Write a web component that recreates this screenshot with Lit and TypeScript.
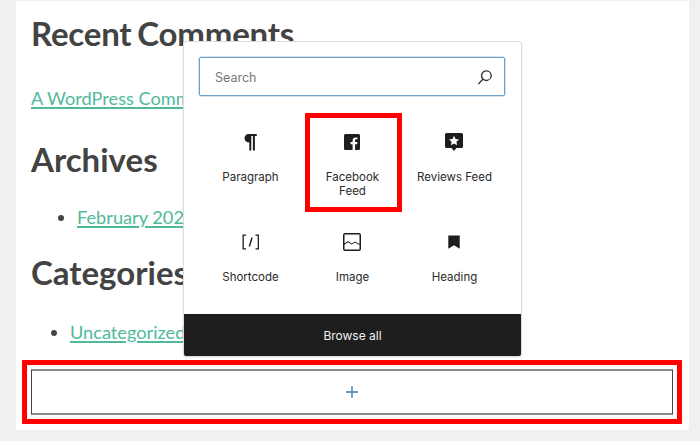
import { LitElement, html, css, svg } from "lit";
import { customElement } from "lit/decorators.js";

const icons: Record<string, unknown> = {
  para: svg`<path d="M10.200 4h8.600v2h-1.900v14.500h-2V6h-1.600v14.500h-2v-7.900c-2.800 0-4.800-1.800-4.800-4.300S8.500 4 10.200 4z"/>`,
  fb: svg`<path fill-rule="evenodd" d="M5.500 4h13A1.500 1.500 0 0 1 20 5.500v13a1.500 1.500 0 0 1-1.500 1.500h-3.400v-5.800h2l.3-2.300h-2.300v-1.500c0-.7.200-1.100 1.100-1.100h1.300V7.700c-.3 0-1-.1-1.800-.1-1.800 0-3.100 1.100-3.100 3.100v1.200h-2.100v2.300h2.100V20H5.500A1.500 1.500 0 0 1 4 18.500v-13A1.500 1.500 0 0 1 5.500 4z"/>`,
  rev: svg`<path fill-rule="evenodd" d="M4.500 3h15A1.500 1.500 0 0 1 21 4.500v12a1.500 1.500 0 0 1-1.500 1.500h-5L12 21l-2.500-3h-5A1.500 1.500 0 0 1 3 16.500v-12A1.500 1.500 0 0 1 4.500 3zM12 5.800l-1.500 3.200-3.500.4 2.600 2.400-.7 3.500 3.100-1.800 3.100 1.800-.7-3.500 2.600-2.400-3.500-.4z"/>`,
  short: svg`<path d="M4.500 4.500h3.500v1.300H5.800v12.400H8v1.300H4.500zM21 4.500h-3.500v1.300h2.200v12.400h-2.200v1.300H21zM13.300 7.500h1.500l-2.700 9h-1.500z"/>`,
  img: svg`<path fill-rule="evenodd" d="M5 3h14a2 2 0 0 1 2 2v14a2 2 0 0 1-2 2H5a2 2 0 0 1-2-2V5a2 2 0 0 1 2-2zm0 1.500a.5.5 0 0 0-.5.5v8.600l3.600-2.600 3.600 2.400 3.400-2 4.400 2.500V5a.5.5 0 0 0-.5-.5zm14.500 10.600-4.400-2.500-3.400 2-3.600-2.400-3.600 2.600V19c0 .3.200.5.500.5h14c.3 0 .5-.2.500-.5z"/>`,
  head: svg`<path d="M6.300 5.500h11.400v13.200L12 15.200l-5.700 3.500z"/>`,
};

const row1 = [
  { icon: "para", label: "Paragraph" },
  { icon: "fb", label: "Facebook Feed", marked: true },
  { icon: "rev", label: "Reviews Feed" },
];
const row2 = [
  { icon: "short", label: "Shortcode" },
  { icon: "img", label: "Image" },
  { icon: "head", label: "Heading" },
];

@customElement("app-root")
export class AppRoot extends LitElement {
  static styles = css`
    :host {
      display: block;
      width: 700px;
      height: 441px;
      background: #f0f0f0;
      overflow: hidden;
      position: relative;
      font-family: Lato, "Liberation Sans", sans-serif;
    }
    .card {
      margin: 1px 11px 0 16px;
      height: 429px;
      box-sizing: border-box;
      background: #fff;
      padding: 12px 7px 0 6px;
      display: flex;
      flex-direction: column;
    }
    .content { height: 347px; padding: 0 9px; flex: none; color: #444; }
    h2 {
      margin: 0;
      font-size: 33px;
      line-height: 40px;
      font-weight: 700;
      color: #434343;
      word-spacing: -2px;
    }
    h2.tight { letter-spacing: -.2px; }
    .link {
      color: #4fb99b;
      text-decoration: underline;
      text-decoration-thickness: 1.500px;
      text-underline-offset: 2px;
      font-size: 18.200px;
    }
    p { margin: 32px 0 28px; line-height: 26px; height: 26px; white-space: nowrap; }
    ul { line-height: 26px; font-size: 18.200px; }
    ul.a { margin: 25px 0 22px; padding-left: 46px; }
    ul.b { margin: 27px 0 0; padding-left: 39px; }
    li { white-space: nowrap; }
    .frame {
      flex: none;
      height: 64px;
      box-sizing: border-box;
      border: 5px solid #fe0000;
      padding: 4px;
    }
    .add {
      height: 100%;
      box-sizing: border-box;
      border: 1px solid #444;
      border-top: 2px solid #8a8a8a;
      border-bottom: 2px solid #8a8a8a;
      display: flex;
      align-items: center;
      justify-content: center;
    }
    .add svg { width: 24px; height: 24px; fill: #3d83b4; }
    .pop {
      position: absolute;
      left: 184px;
      top: 42px;
      width: 337px;
      height: 314px;
      box-sizing: border-box;
      background: #fff;
      border-radius: 2px;
      box-shadow: 0 0 0 1px #dcdcdc, 0 1px 3px rgba(0,0,0,.15);
      display: flex;
      flex-direction: column;
      font-family: Inter, "Liberation Sans", sans-serif;
      color: #2b2b2b;
    }
    .search {
      margin: 15px 16px 0 15px;
      height: 39px;
      box-sizing: border-box;
      border: 1px solid #6f9fc6;
      border-radius: 2px;
      box-shadow: 0 0 0 .5px #a9c6de;
      display: flex;
      align-items: center;
      justify-content: space-between;
      padding: 2px 8px 0 15px;
      font-size: 12.500px;
      color: #777;
    }
    .search svg { width: 22px; height: 22px; fill: #333; margin-top: -2px; }
    .grid {
      flex: 1;
      margin: 0 15px;
      padding-top: 17px;
      display: grid;
      grid-template-columns: repeat(3, 102px);
      grid-template-rows: 100px 100px;
      align-content: start;
    }
    .cell {
      position: relative;
      display: flex;
      flex-direction: column;
      align-items: center;
      font-size: 11.500px;
      line-height: 14px;
      text-align: center;
      padding: 17px 0 0 1px;
    }
    .cell svg { width: 24px; height: 24px; fill: #1e1e1e; margin: 0 0 16px -1px; flex: none; }
    .cell span { width: 60px; white-space: normal; }
    .cell span.wide { width: auto; white-space: nowrap; }
    .mark {
      position: absolute;
      left: 4px;
      top: 0;
      width: 97px;
      height: 99px;
      box-sizing: border-box;
      border: 5px solid #fe0000;
    }
    .browse {
      height: 42px;
      flex: none;
      background: #1e1e1e;
      border-radius: 0 0 2px 2px;
      color: #f2f2f2;
      font-size: 12px;
      display: flex;
      align-items: center;
      justify-content: center;
    }
  `;

  private cell(c: { icon: string; label: string; marked?: boolean }) {
    return html`<div class="cell">
      ${c.marked ? html`<div class="mark"></div>` : ""}
      <svg viewBox="0 0 24 24">${icons[c.icon]}</svg>
      <span class=${c.marked ? "" : "wide"}>${c.label}</span>
    </div>`;
  }

  render() {
    return html`
      <div class="card">
        <div class="content">
          <h2 class="tight">Recent Comments</h2>
          <p><a class="link">A WordPress Commenter</a></p>
          <h2>Archives</h2>
          <ul class="a"><li><a class="link">February 2021</a></li></ul>
          <h2>Categories</h2>
          <ul class="b"><li><a class="link">Uncategorized</a></li></ul>
        </div>
        <div class="frame">
          <div class="add">
            <svg viewBox="0 0 24 24"><path d="M11.300 6h1.400v5.300H18v1.400h-5.300V18h-1.400v-5.300H6v-1.400h5.300z"/></svg>
          </div>
        </div>
      </div>
      <div class="pop">
        <div class="search">
          <span>Search</span>
          <svg viewBox="0 0 24 24"><path fill-rule="evenodd" d="M13.500 4.500a6 6 0 1 1-3.600 10.800l-4.700 5-1.100-1 4.700-5.100a6 6 0 0 1 4.700-9.700zm0 1.500a4.500 4.500 0 1 0 0 9 4.500 4.500 0 0 0 0-9z"/></svg>
        </div>
        <div class="grid">
          ${row1.map((c) => this.cell(c))}
          ${row2.map((c) => this.cell(c))}
        </div>
        <div class="browse">Browse all</div>
      </div>
    `;
  }
}
